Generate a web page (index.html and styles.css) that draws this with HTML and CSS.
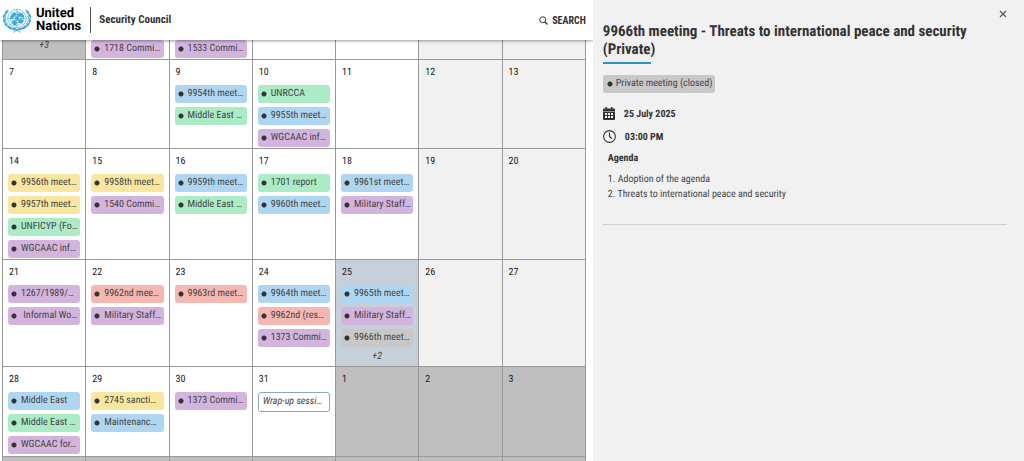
FILE: index.html
```html
<!doctype html>
<html lang="en">
<head>
<meta charset="utf-8">
<title>Security Council</title>
<link rel="stylesheet" href="styles.css">
</head>

<body>
<div class="page">
	<main class="main">
		<header class="header">
			<a class="brand" href="#">
				<svg class="brand-logo" viewBox="0 0 60 52" aria-hidden="true">
					<g fill="none" stroke="#3fa9dc" stroke-width="1.3">
						<circle cx="30" cy="23" r="18.5"/>
						<circle cx="30" cy="23" r="13.5"/>
						<circle cx="30" cy="23" r="8.5"/>
						<circle cx="30" cy="23" r="4"/>
						<path d="M30 4v38M11 23h38M17 10l26 26M43 10L17 36"/>
					</g>
					<g fill="#3fa9dc">
						<path d="M18 17l6-6 5 2-2 5-4 2-2 4-5-1zM33 12l8 1 4 6-3 3-5-3-5 1-3-4zM20 28l6-2 4 4-2 6-4 2-3-5zM34 25l6-1 3 4-4 5-4-1-3-3zM27 19l6 1 1 5-5 1-3-3z"/>
						<path d="M13 5c-5 1-8 5-8 9 4 0 8-4 8-9zM7 12c-5 3-6 7-5 11 4-2 6-6 5-11zM4 21c-3 5-2 9 1 12 3-3 2-8-1-12zM5 30c-1 5 2 9 6 10 1-4-2-8-6-10zM10 37c1 5 5 8 10 8-1-5-5-8-10-8zM18 42c3 5 8 6 13 4-3-4-8-5-13-4z"/>
						<path d="M47 5c5 1 8 5 8 9-4 0-8-4-8-9zM53 12c5 3 6 7 5 11-4-2-6-6-5-11zM56 21c3 5 2 9-1 12-3-3-2-8 1-12zM55 30c1 5-2 9-6 10-1-4 2-8 6-10zM50 37c-1 5-5 8-10 8 1-5 5-8 10-8zM42 42c-3 5-8 6-13 4 3-4 8-5 13-4z"/>
					</g>
					<path d="M12 7C2 20 7 40 29 46l9 5M48 7c10 13 5 33-17 39l-9 5" fill="none" stroke="#3fa9dc" stroke-width="1.5"/>
				</svg>
				<span class="brand-name">United<br>Nations</span>
			</a>
			<a class="site-name" href="#">Security Council</a>
			<button class="search" type="button">
				<svg class="search-icon" viewBox="0 0 18 18" aria-hidden="true"><circle cx="7.5" cy="7.5" r="6" fill="none" stroke="#333" stroke-width="2"/><path d="M12 12l5 5" stroke="#333" stroke-width="2.4"/></svg>
				SEARCH
			</button>
		</header>

		<div class="calendar-wrap">
			<table class="calendar">
				<tr class="first">
					<td class="other"><a class="more" href="#">+3</a></td>
					<td><a class="event purple" href="#">1718 Commi…</a></td>
					<td><a class="event purple" href="#">1533 Commi…</a></td>
					<td></td>
					<td></td>
					<td class="weekend"></td>
					<td class="weekend"></td>
				</tr>
				<tr>
					<td><span class="day">7</span></td>
					<td><span class="day">8</span></td>
					<td>
						<span class="day">9</span>
						<a class="event blue" href="#">9954th meet…</a>
						<a class="event green" href="#">Middle East …</a>
					</td>
					<td>
						<span class="day">10</span>
						<a class="event green" href="#">UNRCCA</a>
						<a class="event blue" href="#">9955th meet…</a>
						<a class="event purple" href="#">WGCAAC inf…</a>
					</td>
					<td><span class="day">11</span></td>
					<td class="weekend"><span class="day">12</span></td>
					<td class="weekend"><span class="day">13</span></td>
				</tr>
				<tr>
					<td>
						<span class="day">14</span>
						<a class="event yellow" href="#">9956th meet…</a>
						<a class="event yellow" href="#">9957th meet…</a>
						<a class="event green" href="#">UNFICYP (Fo…</a>
						<a class="event purple" href="#">WGCAAC inf…</a>
					</td>
					<td>
						<span class="day">15</span>
						<a class="event yellow" href="#">9958th meet…</a>
						<a class="event purple" href="#">1540 Commi…</a>
					</td>
					<td>
						<span class="day">16</span>
						<a class="event blue" href="#">9959th meet…</a>
						<a class="event green" href="#">Middle East …</a>
					</td>
					<td>
						<span class="day">17</span>
						<a class="event green" href="#">1701 report</a>
						<a class="event blue" href="#">9960th meet…</a>
					</td>
					<td>
						<span class="day">18</span>
						<a class="event blue" href="#">9961st meet…</a>
						<a class="event purple" href="#">Military Staff…</a>
					</td>
					<td class="weekend"><span class="day">19</span></td>
					<td class="weekend"><span class="day">20</span></td>
				</tr>
				<tr>
					<td>
						<span class="day">21</span>
						<a class="event purple" href="#">1267/1989/…</a>
						<a class="event purple" href="#">&nbsp;Informal Wo…</a>
					</td>
					<td>
						<span class="day">22</span>
						<a class="event red" href="#">9962nd mee…</a>
						<a class="event purple" href="#">Military Staff…</a>
					</td>
					<td>
						<span class="day">23</span>
						<a class="event red" href="#">9963rd meet…</a>
					</td>
					<td>
						<span class="day">24</span>
						<a class="event blue" href="#">9964th meet…</a>
						<a class="event red" href="#">9962nd (res…</a>
						<a class="event purple" href="#">1373 Commi…</a>
					</td>
					<td class="today">
						<span class="day">25</span>
						<a class="event blue" href="#">9965th meet…</a>
						<a class="event purple" href="#">Military Staff…</a>
						<a class="event grey" href="#">9966th meet…</a>
						<a class="more" href="#">+2</a>
					</td>
					<td class="weekend"><span class="day">26</span></td>
					<td class="weekend"><span class="day">27</span></td>
				</tr>
				<tr>
					<td>
						<span class="day">28</span>
						<a class="event blue" href="#">Middle East</a>
						<a class="event green" href="#">Middle East …</a>
						<a class="event purple" href="#">WGCAAC for…</a>
					</td>
					<td>
						<span class="day">29</span>
						<a class="event yellow" href="#">2745 sancti…</a>
						<a class="event blue" href="#">Maintenanc…</a>
					</td>
					<td>
						<span class="day">30</span>
						<a class="event purple" href="#">1373 Commi…</a>
					</td>
					<td>
						<span class="day">31</span>
						<a class="event outline" href="#">Wrap-up sessi…</a>
					</td>
					<td class="other"><span class="day">1</span></td>
					<td class="other"><span class="day">2</span></td>
					<td class="other"><span class="day">3</span></td>
				</tr>
				<tr>
					<td class="other"></td>
					<td class="other"></td>
					<td class="other"></td>
					<td class="other"></td>
					<td class="other"></td>
					<td class="other"></td>
					<td class="other"></td>
				</tr>
			</table>
		</div>
	</main>

	<aside class="panel">
		<button class="close" type="button" aria-label="Close">
			<svg viewBox="0 0 8 8" width="8" height="8" aria-hidden="true"><path d="M1 1l6 6M7 1L1 7" stroke="#555" stroke-width="1.2"/></svg>
		</button>
		<h1 class="title">9966th meeting - Threats to international peace and security (Private)</h1>
		<span class="badge">Private meeting (closed)</span>
		<div class="info date">
			<svg viewBox="0 0 24 26" width="12" height="13" aria-hidden="true"><path fill="#333" fill-rule="evenodd" d="M5 0h3v3h8V0h3v3h3q2 0 2 2v4H0V5q0-2 2-2h3zM0 10h24v14q0 2-2 2H2q-2 0-2-2zM4 12v4h4v-4zM10 12v4h4v-4zM16 12v4h4v-4zM4 18v4h4v-4zM10 18v4h4v-4zM16 18v4h4v-4z"/></svg>
			<span>25 July 2025</span>
		</div>
		<div class="info time">
			<svg viewBox="0 0 26 26" width="13" height="13" aria-hidden="true"><circle cx="13" cy="13" r="11.8" fill="none" stroke="#333" stroke-width="2.2"/><path d="M13 5v8l5 4" fill="none" stroke="#333" stroke-width="2.2"/></svg>
			<span>03:00 PM</span>
		</div>
		<section class="agenda">
			<h2>Agenda</h2>
			<p>1. Adoption of the agenda</p>
			<p>2. Threats to international peace and security</p>
		</section>
		<hr>
	</aside>
</div>
</body>
</html>
```

FILE: styles.css
```css
* {
	box-sizing: border-box;
}
body {
	margin: 0;
	font: 10px/14px "Roboto Condensed", Roboto, "Liberation Sans", sans-serif;
	color: #454545;
	background: #fff;
	text-rendering: geometricPrecision;
}
a {
	color: inherit;
	text-decoration: none;
}
button {
	border: 0;
	padding: 0;
	background: none;
	cursor: pointer;
}
.page {
	display: grid;
	grid-template-columns: 11fr 8fr;
	height: 100vh;
	overflow: hidden;
}
.main {
	min-width: 0;
	overflow: hidden;
}

/* header */
.header {
	position: relative;
	z-index: 2;
	display: flex;
	align-items: center;
	height: 40px;
	padding: 0 7px 0 2px;
	background: #fff;
	box-shadow: 0 1px 3px rgba(0,0,0,.4);
}
.brand {
	display: flex;
	align-items: center;
	gap: 4px;
	height: 26px;
	padding-right: 9px;
	border-right: 1px solid #555;
}
.brand-logo {
	width: 30px;
	height: 26px;
}
.brand-name {
	font-family: Roboto, "Liberation Sans", sans-serif;
	font-size: 13px;
	line-height: 13px;
	font-weight: bold;
	color: #000;
}
.site-name,
.search,
.title,
.info,
.agenda h2 {
	font-family: "Roboto Condensed", Roboto, "Liberation Sans", sans-serif;
	font-weight: bold;
	color: #333;
}
.site-name {
	margin-left: 8px;
	font-size: 11px;
}
.search {
	display: flex;
	align-items: center;
	gap: 4px;
	margin-left: auto;
	font-size: 10px;
}
.search-icon {
	width: 9px;
	height: 9px;
}

/* calendar */
.calendar-wrap {
	margin-top: -5px;
	padding: 0 7px 0 2px;
}
.calendar {
	width: 100%;
	table-layout: fixed;
	border-collapse: collapse;
}
.calendar td {
	padding: 0 5px 1px;
	border: 1px solid #999;
	vertical-align: top;
}
.calendar .first td {
	height: 24px;
}
.calendar .first .event {
	margin-top: 4px;
}
.calendar .weekend {
	background: #f1f1f1;
}
.calendar .other {
	height: 90px;
	background: #bfbfbf;
}
.calendar .today {
	background: #c5d0da;
}
.day {
	display: block;
	height: 25px;
	padding: 6px 0 0 1px;
	color: #222;
}
.event {
	display: block;
	height: 18px;
	padding: 0 2px 0 13px;
	line-height: 18px;
	border-radius: 3px;
	overflow: hidden;
	white-space: nowrap;
	text-overflow: ellipsis;
	background-image: radial-gradient(circle at 6px 9px, #333 2px, transparent 3px);
}
.event + .event {
	margin-top: 4px;
}
.blue { background-color: #aed6f1; }
.green { background-color: #abebc6; }
.purple { background-color: #d2b4de; }
.yellow { background-color: #f9e79f; }
.red { background-color: #f5b7b1; }
.grey { background-color: #c8c8c8; }
.outline {
	height: 20px;
	padding: 0 4px;
	border: 1px solid #8aa9b8;
	background: #fff;
	font-style: italic;
}
.more {
	display: block;
	height: 18px;
	padding-top: 3px;
	text-align: center;
	font-style: italic;
}

/* meeting details */
.panel {
	display: flex;
	flex-direction: column;
	align-items: flex-start;
	padding: 10px 17px 0 10px;
	background: #f1f1f1;
}
.close {
	display: flex;
	align-self: flex-end;
}
.title {
	margin: 4px 0 0;
	font-size: 15px;
	line-height: 18px;
}
.title::after {
	content: "";
	display: block;
	width: 48px;
	height: 2px;
	margin-top: 4px;
	background: #2b93c4;
}
.badge {
	margin-top: 11px;
	padding: 2px 3px 2px 13px;
	border-radius: 3px;
	background: #c8c8c8 radial-gradient(circle at 7px 9px, #333 2px, transparent 3px);
}
.info {
	display: flex;
	align-items: flex-start;
	gap: 9px;
	height: 15px;
	font-size: 10px;
	line-height: 16px;
}
.date {
	margin-top: 14px;
}
.time {
	margin-top: 8px;
}
.agenda {
	padding: 0 5px;
}
.agenda h2 {
	margin: 7px 0 6px;
	font-size: 10px;
	line-height: 14px;
}
.agenda p {
	margin: 0;
	line-height: 15px;
}
.panel hr {
	width: 100%;
	margin: 22px 0 0;
	border: 0;
	border-top: 1px solid #d0d0d0;
}
```
